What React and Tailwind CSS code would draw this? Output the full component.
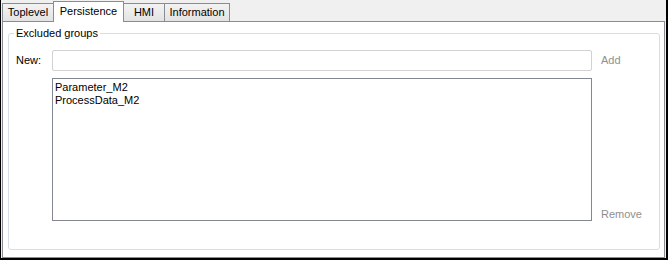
const tabs = [
  { label: "Toplevel", width: "w-[52px]" },
  { label: "Persistence", width: "w-[71px]", active: true },
  { label: "HMI", width: "w-[42px]" },
  { label: "Information", width: "w-[66px]" },
];

const groups = ["Parameter_M2", "ProcessData_M2"];

export default function App() {
  return (
    <div
      className="flex h-[260px] w-[668px] flex-col border-b-2 border-l border-r-2 border-black bg-[#f0f0f0] pl-[1px] pr-[1px] pt-[1px] text-[11px] leading-[13px] text-black"
      style={{ fontFamily: '"Liberation Sans", Arial, sans-serif' }}
    >
      {/* tab strip */}
      <div className="flex h-[20px] items-end">
        {tabs.map((tab, i) =>
          tab.active ? (
            <div
              key={tab.label}
              className={`relative z-10 -mb-[1px] -ml-[1px] flex h-[21px] items-start justify-center border border-b-0 border-[#898c95] bg-white pt-[3px] ${tab.width}`}
            >
              {tab.label}
            </div>
          ) : (
            <div
              key={tab.label}
              className={`flex h-[18px] items-center justify-center border border-b-0 border-[#898c95] bg-gradient-to-b from-[#f3f3f3] to-[#e3e3e3] ${i > 0 ? "-ml-[1px]" : ""} ${tab.width}`}
            >
              {tab.label}
            </div>
          )
        )}
      </div>

      {/* tab page */}
      <div className="flex flex-1 flex-col border border-[#898c95] bg-white pb-[7px] pl-[5px] pr-[4px] pt-[5px]">
        <fieldset className="min-w-0 flex-1 rounded-[3px] border border-[#d5dfe5] pb-[28px] pl-[7px] pt-[10px]">
          <legend className="-ml-[2px] px-[2px] leading-[13px]">Excluded groups</legend>

          <div className="grid grid-cols-[36px_540px_1fr] grid-rows-[21px_143px] gap-y-[7px]">
            <div className="flex items-center">New:</div>
            <div className="rounded-[2px] border border-[#d2d2d2] bg-white" />
            <div className="flex items-center pl-[9px] text-[#8f8f8f]">Add</div>

            <div />
            <div className="border border-[#828790] bg-white pl-[2px] pt-[2px]">
              {groups.map((g) => (
                <div key={g} className="leading-[13px]">
                  {g}
                </div>
              ))}
            </div>
            <div className="flex items-end pl-[9px] text-[#8f8f8f]">Remove</div>
          </div>
        </fieldset>
      </div>
    </div>
  );
}
